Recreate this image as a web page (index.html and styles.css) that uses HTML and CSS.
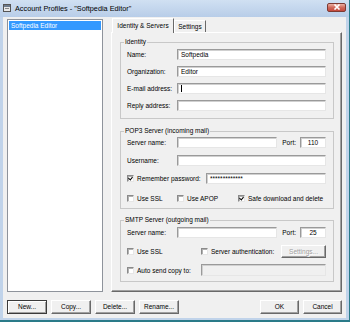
FILE: index.html
```html
<!DOCTYPE html>
<html>
<head>
    <meta charset="UTF-8">
    <title>Account Profiles</title>
    <link rel="stylesheet" href="styles.css">
</head>
<body>
<div class="window">
    <div class="titlebar">
        <svg class="app-icon" width="8" height="8" viewBox="0 0 8 8">
            <rect x="0.5" y="0.5" width="7" height="7" fill="#e8e8e8" stroke="#555"/>
            <rect x="1" y="1" width="6" height="2" fill="#6d7b8c"/>
            <rect x="2" y="4" width="4" height="1" fill="#888"/>
        </svg>
        <span class="title">Account Profiles - "Softpedia Editor"</span>
        <div class="close">
            <svg width="8" height="6" viewBox="0 0 8 6">
                <path d="M1.5 0.5 L6.5 5.5 M6.5 0.5 L1.5 5.5" stroke="#fff" stroke-width="1.6"/>
            </svg>
        </div>
    </div>
    <div class="client">
        <div class="main">
            <div class="profiles">
                <div class="profile selected">Softpedia Editor</div>
            </div>
            <div class="tabbox">
                <div class="tabstrip">
                    <div class="tab active">Identity &amp; Servers</div>
                    <div class="tab">Settings</div>
                </div>
                <div class="panel">
                    <fieldset class="group identity">
                        <legend>Identity</legend>
                        <div class="row"><span class="lbl">Name:</span><div class="field">Softpedia</div></div>
                        <div class="row"><span class="lbl">Organization:</span><div class="field">Editor</div></div>
                        <div class="row"><span class="lbl">E-mail address:</span><div class="field"><span class="caret"></span></div></div>
                        <div class="row"><span class="lbl">Reply address:</span><div class="field"></div></div>
                    </fieldset>

                    <fieldset class="group pop3">
                        <legend>POP3 Server (incoming mail)</legend>
                        <div class="row">
                            <span class="lbl">Server name:</span><div class="field"></div>
                            <span class="port-lbl">Port:</span><div class="field port">110</div>
                        </div>
                        <div class="row"><span class="lbl">Username:</span><div class="field"></div></div>
                        <div class="row">
                            <span class="opt w-remember"><span class="check checked"></span>Remember password:</span>
                            <div class="field">*************</div>
                        </div>
                        <div class="row">
                            <span class="opt w-ssl"><span class="check"></span>Use SSL</span>
                            <span class="opt w-apop"><span class="check"></span>Use APOP</span>
                            <span class="opt"><span class="check checked"></span>Safe download and delete</span>
                        </div>
                    </fieldset>

                    <fieldset class="group smtp">
                        <legend>SMTP Server (outgoing mail)</legend>
                        <div class="row">
                            <span class="lbl">Server name:</span><div class="field"></div>
                            <span class="port-lbl">Port:</span><div class="field port">25</div>
                        </div>
                        <div class="row tall">
                            <span class="opt w-smtp"><span class="check"></span>Use SSL</span>
                            <span class="opt"><span class="check"></span>Server authentication:</span>
                            <div class="btn small disabled">Settings...</div>
                        </div>
                        <div class="row">
                            <span class="opt w-smtp"><span class="check"></span>Auto send copy to:</span>
                            <div class="field disabled"></div>
                        </div>
                    </fieldset>
                </div>
            </div>
        </div>
        <div class="buttons">
            <div class="btn default">New...</div>
            <div class="btn">Copy...</div>
            <div class="btn">Delete...</div>
            <div class="btn">Rename...</div>
            <div class="spacer"></div>
            <div class="btn">OK</div>
            <div class="btn">Cancel</div>
        </div>
    </div>
</div>
</body>
</html>
```

FILE: styles.css
```css
* {
    box-sizing: border-box;
}
body {
    margin: 0;
    background: #2a7b89;
    font-family: "Liberation Sans", Arial, sans-serif;
    font-size: 6.5px;
    color: #000;
}
.window {
    width: 349px;
    height: 320px;
    background: #c0d3ea;
    display: flex;
    flex-direction: column;
}
.titlebar {
    height: 17px;
    display: flex;
    align-items: center;
    padding: 0 3px 1px 3px;
    background: linear-gradient(#d0e0f2, #b8cde8);
}
.app-icon {
    margin-right: 4px;
}
.title {
    font-size: 7.3px;
    flex: 1;
}
.close {
    width: 19px;
    height: 9px;
    margin-top: -2px;
    border: 1px solid #7d3a33;
    border-radius: 2px;
    background: linear-gradient(#eab0a3, #d06a5c 50%, #c4483c);
    display: flex;
    align-items: center;
    justify-content: center;
}
.client {
    flex: 1;
    margin: 0 3px 2px 3px;
    background: #f0f0f0;
    padding: 1px 4px 4px 4px;
    display: flex;
    flex-direction: column;
}
.main {
    height: 274px;
    display: flex;
    gap: 8px;
}
.profiles {
    width: 96px;
    height: 273px;
    margin-top: 1px;
    background: #fff;
    border: 1px solid #8e939b;
    padding: 1px;
}
.profile {
    height: 9px;
    line-height: 9px;
    padding-left: 2px;
}
.profile.selected {
    background: #3399ff;
    color: #fff;
}
.tabbox {
    width: 231px;
    display: flex;
    flex-direction: column;
}
.tabstrip {
    height: 14px;
    display: flex;
    align-items: flex-start;
    padding-left: 1px;
    position: relative;
    z-index: 1;
}
.tab {
    height: 12px;
    margin-top: 2px;
    width: 32px;
    line-height: 11px;
    text-align: center;
    background: #f0f0f0;
    border: 1px solid;
    border-color: #fff #696969 transparent #fff;
    border-bottom: none;
}
.tab.active {
    width: 62px;
    height: 15px;
    margin-top: 0;
    padding-top: 1px;
}
.panel {
    flex: 1;
    border: 1px solid;
    border-color: #fff #696969 #696969 #fff;
    box-shadow: inset -1px -1px #a0a0a0;
    padding: 5px 7px 0 8px;
}
.group {
    margin: 0;
    border: 1px solid #c8c8c8;
    padding: 3px 7px 7px 6px;
    display: flex;
    flex-direction: column;
    gap: 6px;
}
.group legend {
    line-height: 8px;
    padding: 0 1px;
    margin-left: -3px;
}
.pop3 {
    margin-top: 8px;
    padding-top: 2px;
    padding-bottom: 4px;
}
.smtp {
    margin-top: 7px;
    padding-bottom: 5px;
}
.row {
    height: 11px;
    display: flex;
    align-items: center;
}
.pop3 .row + .row {
    margin-top: 1px;
}
.pop3 .row:last-child {
    margin-top: 3px;
}
.smtp .row.tall {
    height: 13px;
    margin-top: 1px;
}
.smtp .row:last-child {
    height: 12px;
}
.lbl {
    width: 50px;
    flex: none;
}
.field {
    flex: 1;
    height: 100%;
    background: #fff;
    border: 1px solid;
    border-color: #9a9a9a #e6e6e6 #e6e6e6 #9a9a9a;
    box-shadow: inset 1px 1px #d0d0d0;
    padding-left: 3px;
    line-height: 9px;
    display: flex;
    align-items: center;
}
.field.port {
    flex: none;
    width: 26px;
    padding-left: 0;
    justify-content: center;
}
.field.disabled {
    background: #f0f0f0;
}
.port-lbl {
    margin: 0 4px 0 5px;
}
.caret {
    width: 1px;
    height: 7px;
    background: #000;
}
.opt {
    display: flex;
    align-items: center;
    flex: none;
}
.w-remember {
    width: 79px;
}
.w-ssl {
    width: 50px;
}
.w-apop {
    width: 61px;
}
.w-smtp {
    width: 74px;
}
.check {
    width: 7px;
    height: 7px;
    margin-right: 3px;
    background: #fff;
    border: 1px solid;
    border-color: #8a8a8a #e6e6e6 #e6e6e6 #8a8a8a;
    box-shadow: inset 1px 1px #b0b0b0;
    position: relative;
}
.check.checked::after {
    content: "";
    position: absolute;
    left: 1px;
    top: 0;
    width: 2px;
    height: 3px;
    border: solid #000;
    border-width: 0 1.4px 1.4px 0;
    transform: rotate(40deg);
}
.btn {
    width: 40px;
    height: 14px;
    line-height: 12px;
    text-align: center;
    background: #f0f0f0;
    border: 1px solid;
    border-color: #fff #696969 #696969 #fff;
    box-shadow: inset -1px -1px #a0a0a0;
}
.btn.default {
    border-color: #3a3a3a;
    box-shadow: inset 1px 1px #fff, inset -1px -1px #a0a0a0;
}
.btn.small {
    width: 45px;
    height: 13px;
    line-height: 11px;
    margin-left: auto;
}
.btn.disabled {
    color: #a0a0a0;
    text-shadow: 1px 1px #fff;
}
.buttons {
    margin-top: 8px;
    display: flex;
    gap: 4px;
}
.spacer {
    flex: 1;
}
.buttons .btn:last-child,
.buttons .btn:nth-last-child(2) {
    width: 39px;
}
```
